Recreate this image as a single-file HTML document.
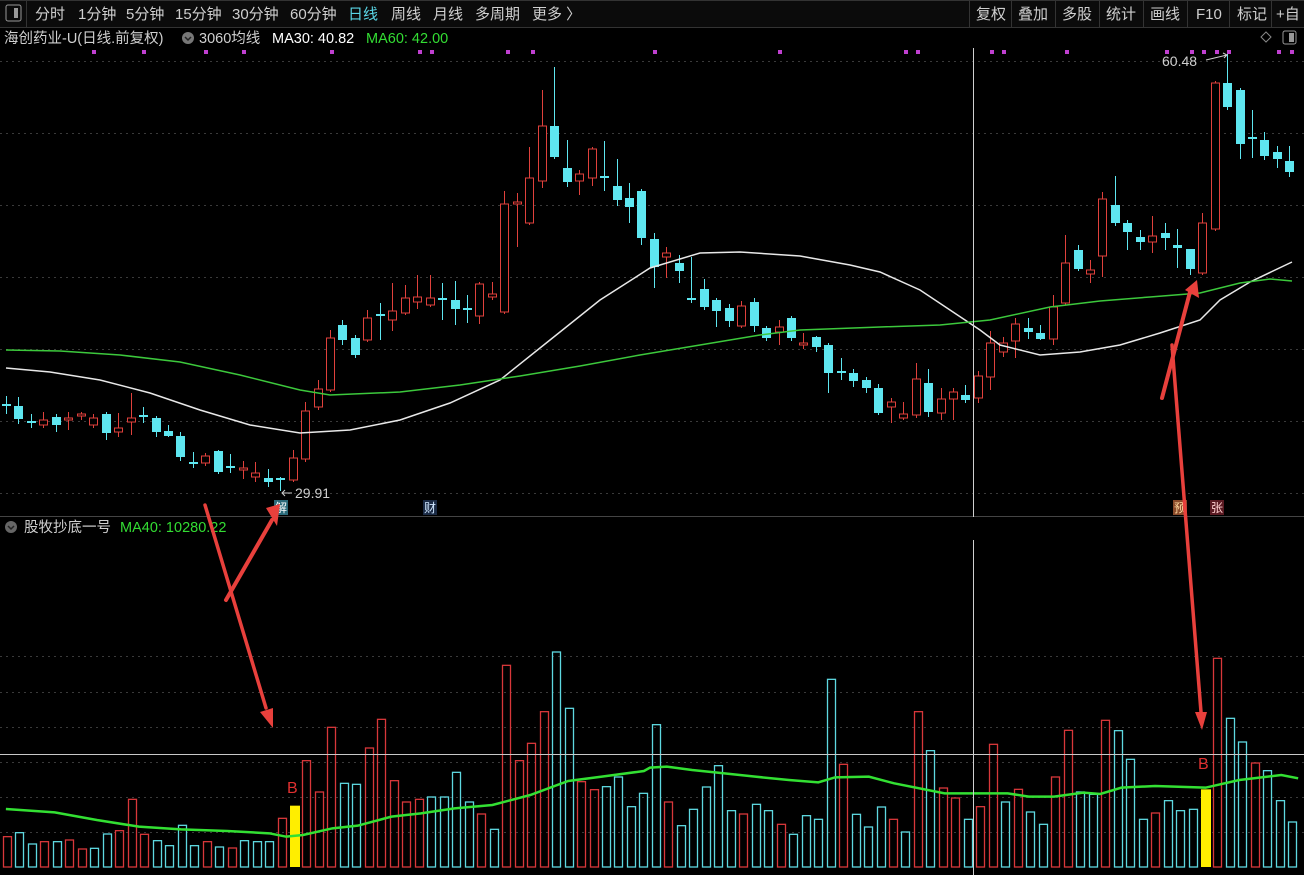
<!DOCTYPE html>
<html><head><meta charset="utf-8">
<style>
html,body{margin:0;padding:0;background:#000;width:1304px;height:875px;overflow:hidden;font-family:"Liberation Sans","Noto Sans CJK SC",sans-serif;}
svg{position:absolute;left:0;top:0}
</style></head><body>
<svg id="s" width="1304" height="875" xmlns="http://www.w3.org/2000/svg" font-family="Liberation Sans, Noto Sans CJK SC, sans-serif">
<rect width="1304" height="875" fill="#000"/>
<rect x="0" y="0" width="1304" height="27" fill="#0b0b0b"/>
<line x1="0" y1="27.5" x2="1304" y2="27.5" stroke="#333"/>
<line x1="0" y1="0.5" x2="1304" y2="0.5" stroke="#333"/>
<rect x="6" y="5" width="15" height="16" fill="none" stroke="#999" rx="2"/><rect x="14" y="8" width="4" height="10" fill="#999"/>
<line x1="26.5" y1="0" x2="26.5" y2="27" stroke="#333"/>
<g font-size="15" fill="#cfcfcf">
<text x="35" y="19">分时</text><text x="78" y="19">1分钟</text><text x="126" y="19">5分钟</text><text x="175" y="19">15分钟</text><text x="232" y="19">30分钟</text><text x="290" y="19">60分钟</text>
<text x="348" y="19" fill="#5ad6e6">日线</text><text x="391" y="19">周线</text><text x="433" y="19">月线</text><text x="475" y="19">多周期</text><text x="532" y="19">更多 〉</text>
<text x="976" y="19">复权</text><text x="1018" y="19">叠加</text><text x="1062" y="19">多股</text><text x="1106" y="19">统计</text><text x="1150" y="19">画线</text><text x="1196" y="19">F10</text><text x="1237" y="19">标记</text><text x="1276" y="19">+自</text>
</g>
<g stroke="#333"><line x1="969.5" y1="0" x2="969.5" y2="27"/><line x1="1011.5" y1="0" x2="1011.5" y2="27"/><line x1="1055.5" y1="0" x2="1055.5" y2="27"/><line x1="1099.5" y1="0" x2="1099.5" y2="27"/><line x1="1143.5" y1="0" x2="1143.5" y2="27"/><line x1="1187.5" y1="0" x2="1187.5" y2="27"/><line x1="1229.5" y1="0" x2="1229.5" y2="27"/><line x1="1271.5" y1="0" x2="1271.5" y2="27"/></g>
<g font-size="14.5">
<text x="4" y="43" fill="#cfcfcf">海创药业-U(日线.前复权)</text>
<circle cx="188" cy="38" r="6" fill="#777"/><path d="M185 37l3 3 3-3" stroke="#222" fill="none" stroke-width="1.5"/>
<text x="199" y="43" fill="#cfcfcf">3060均线</text>
<text x="272" y="43" fill="#ffffff">MA30: 40.82</text>
<text x="366" y="43" fill="#33dd33">MA60: 42.00</text>
</g>
<path d="M1266 32l5 5-5 5-5-5z" fill="none" stroke="#888"/>
<rect x="1283" y="31" width="13" height="13" rx="2" fill="none" stroke="#999"/><rect x="1289" y="33" width="5" height="9" fill="#999"/>
<g id="grid" stroke="#3a3a3a" stroke-dasharray="2,4"></g>
<line x1="0" y1="516.5" x2="1304" y2="516.5" stroke="#444"/>
<g id="dots" fill="#c040d0"></g>
<g id="ch"></g>
<g id="vol"></g>
<polyline id="w" fill="none" stroke="#e8e8e8" stroke-width="1.5"/>
<polyline id="g" fill="none" stroke="#3cc83c" stroke-width="1.5"/>
<polyline id="v" fill="none" stroke="#33e033" stroke-width="2.5"/>
<line x1="973.5" y1="48" x2="973.5" y2="517" stroke="#d0d0d0"/>
<line x1="973.5" y1="540" x2="973.5" y2="875" stroke="#d0d0d0"/>
<line x1="0" y1="754.5" x2="1304" y2="754.5" stroke="#c8c8c8"/>
<g font-size="14">
<text x="295" y="498" fill="#cfcfcf">29.91</text>
<path d="M292 493h-10m3-3l-3 3 3 3" stroke="#ccc" fill="none"/>
<text x="1162" y="66" fill="#cfcfcf">60.48</text>
<path d="M1206 60l21-5m-4-2l4 2-3 3" stroke="#ccc" fill="none"/>
</g>
<g font-size="12">
<rect x="274" y="500" width="14" height="15" fill="#2a6a7a"/><text x="275" y="512" fill="#fff">解</text>
<rect x="423" y="500" width="14" height="15" fill="#1a2a44"/><text x="424" y="512" fill="#cfe6ff">财</text>
<rect x="1173" y="500" width="14" height="15" fill="#8a4a2a"/><text x="1174" y="512" fill="#ffd8a0">预</text>
<rect x="1210" y="500" width="14" height="15" fill="#5a1a22"/><text x="1211" y="512" fill="#ffd0d0">张</text>
</g>
<g font-size="14.5">
<circle cx="11" cy="527" r="6" fill="#666"/><path d="M8 526l3 3 3-3" stroke="#222" fill="none" stroke-width="1.5"/>
<text x="24" y="532" fill="#cfcfcf">股牧抄底一号</text>
<text x="120" y="532" fill="#33dd33">MA40: 10280.22</text>
</g>
<g font-size="16" fill="#e03030"><text x="287" y="793">B</text><text x="1198" y="769">B</text></g>
<g stroke="#e8403c" stroke-width="4" fill="#e8403c" stroke-linecap="round">
<line x1="226" y1="600" x2="272" y2="520"/><path d="M266 508l14-4-3 22z" stroke="none"/>
<line x1="205" y1="505" x2="266" y2="708" stroke-width="3.5"/><path d="M260 712l13 -4 0 20z" stroke="none"/>
<line x1="1162" y1="398" x2="1190" y2="292"/><path d="M1185 290l12-10 2 18z" stroke="none"/>
<line x1="1172" y1="345" x2="1201" y2="712" stroke-width="3.5"/><path d="M1195 712l12 0-5 18z" stroke="none"/>
</g>
</svg>
<script>
var NS="http://www.w3.org/2000/svg";
function el(p,t,a){var e=document.createElementNS(NS,t);for(var k in a)e.setAttribute(k,a[k]);p.appendChild(e);return e;}
var grid=document.getElementById('grid');
[61,133,205,277,349,421,493,656,692,727,762,797,832].forEach(function(y){el(grid,'line',{x1:0,x2:1304,y1:y+.5,y2:y+.5});});
var dots=document.getElementById('dots');
[94,144,206,244,332,420,432,508,533,655,780,906,918,992,1004,1067,1167,1192,1204,1217,1229,1279,1292].forEach(function(x){el(dots,'rect',{x:x-2,y:50,width:4,height:4});});
var R="#e0413c",C="#5ee6f0";
var D={0:[404,406,396,414],1:[406,419,397,424],2:[421,423,414,428],3:[425,420,412,428],4:[417,425,414,432],5:[419,418,412,430],6:[416,414,412,420],7:[425,418,414,428],8:[414,433,412,440],9:[432,428,413,437],10:[422,418,393,435],11:[415,416,407,423],12:[418,432,416,437],13:[431,436,425,437],14:[436,457,432,461],15:[462,464,452,468],16:[463,456,453,466],17:[451,472,450,474],18:[466,468,454,473],19:[470,468,461,479],20:[477,473,462,482],21:[478,482,469,487],22:[478,479,477,491],23:[480,458,450,482],24:[459,411,402,462],25:[407,389,380,410],26:[390,338,330,392],27:[325,340,320,345],28:[338,355,335,358],29:[340,318,310,342],30:[314,316,303,340],31:[320,311,283,331],32:[313,298,285,315],33:[302,297,275,309],34:[305,298,275,307],35:[298,300,283,320],36:[300,309,281,325],37:[308,310,295,323],38:[316,284,282,324],39:[297,294,282,300],40:[312,204,191,314],41:[204,202,193,247],42:[223,178,147,225],43:[181,126,90,188],44:[126,157,67,159],45:[168,182,140,187],46:[181,174,170,195],47:[178,149,147,186],48:[176,178,141,191],49:[186,200,159,206],50:[198,207,183,223],51:[191,238,189,245],52:[239,267,233,288],53:[257,253,247,278],54:[263,271,255,283],55:[298,300,257,303],56:[289,307,279,310],57:[300,311,298,327],58:[308,321,304,327],59:[326,306,301,328],60:[302,326,298,332],61:[328,338,326,341],62:[332,327,320,345],63:[318,338,316,341],64:[345,343,333,349],65:[337,347,336,352],66:[345,373,343,393],67:[371,373,358,380],68:[373,381,369,387],69:[380,388,377,393],70:[388,413,384,415],71:[407,402,398,423],72:[418,414,402,420],73:[415,379,363,418],74:[383,412,369,417],75:[413,399,388,420],76:[399,392,388,420],77:[395,400,385,403],78:[398,376,371,403],79:[377,343,331,390],80:[352,343,337,357],81:[341,324,318,358],82:[328,332,318,339],83:[333,339,325,340],84:[339,307,295,345],85:[303,263,235,305],86:[250,269,245,271],87:[274,270,260,283],88:[256,199,192,277],89:[205,223,176,226],90:[223,232,220,250],91:[237,242,230,250],92:[242,236,216,253],93:[233,238,223,250],94:[245,248,229,268],95:[249,269,249,275],96:[273,223,213,275],97:[229,83,81,231],98:[83,107,54,110],99:[90,144,88,159],100:[137,137,110,158],101:[140,156,132,160],102:[152,159,146,168],103:[161,172,146,177]};
var ch=document.getElementById('ch');
for(var i=0;i<=103;i++){var d=D[i];if(!d)continue;var x=Math.round(6+12.46*i)+.5;var up=d[1]<d[0];var col=up?R:C;
var t=Math.min(d[0],d[1]),b=Math.max(d[0],d[1]);if(b-t<2)b=t+2;
el(ch,'line',{x1:x,x2:x,y1:d[2],y2:d[3],stroke:col});
if(up)el(ch,'rect',{x:x-4,y:t,width:8,height:b-t,fill:'#000',stroke:col});
else el(ch,'rect',{x:x-4.5,y:t,width:9,height:b-t,fill:col});}
var v1=[[590,'r'],[578,'c'],[612,'c'],[605,'r'],[605,'c'],[600,'r'],[627,'r'],[625,'c'],[582,'c'],[572,'r'],[478,'r'],[583,'r'],[602,'c'],[617,'c'],[556,'c'],[617,'c'],[605,'r'],[621,'c'],[624,'r'],[602,'c'],[605,'c'],[605,'c'],[535,'r'],[497,'y'],[362,'r'],[456,'r'],[262,'r'],[430,'c'],[433,'c'],[324,'r'],[238,'r'],[422,'r'],[486,'r'],[478,'r'],[471,'c'],[471,'c'],[397,'c'],[486,'c'],[522,'r'],[568,'c'],[76,'r'],[362,'r'],[310,'r'],[215,'r'],[36,'c'],[205,'c'],[425,'r'],[449,'r'],[440,'c'],[411,'c'],[500,'c'],[460,'c'],[254,'c'],
[486,'r'],[557,'c'],[508,'c'],[441,'c'],[377,'c'],[512,'c'],[522,'r'],[493,'c'],[512,'c'],[553,'r'],[583,'c'],[527,'c'],[538,'c'],[118,'c'],[373,'r'],[523,'c'],[561,'c'],[501,'c'],[538,'r'],[576,'c'],[215,'r'],[332,'c'],[444,'r'],[474,'r'],[538,'c'],[500,'r'],[313,'r'],[486,'c'],[448,'r'],[516,'c'],[553,'c'],[411,'r'],[271,'r'],[456,'c'],[463,'c'],[241,'r'],[272,'c'],[358,'c'],[538,'c'],[519,'r'],[482,'c'],[512,'c'],[508,'c'],[448,'y'],[55,'r'],[235,'c'],[306,'c'],[369,'r'],[392,'c'],[482,'c'],[546,'c']];
var vol=document.getElementById('vol');
var yi=-1;v1.forEach(function(v,i){if(v[1]=='y'&&i>30)yi=i;});
v1.forEach(function(v,i){var xl;
if(i<=23) xl=3+(287/23)*i; else xl=290+(1201-290)/(yi-23)*(i-23);
var x=Math.round(xl)+.5;var top=640+v[0]/3;var bot=867;
if(v[1]=='y')el(vol,'rect',{x:x-0.5,y:top,width:10,height:bot-top,fill:'#ffee00'});
else el(vol,'rect',{x:x,y:top,width:8,height:bot-top,fill:'none',stroke:v[1]=='r'?'#d8373a':'#5ed8e0','stroke-width':1.3});});
function pl(id,pts){document.getElementById(id).setAttribute('points',pts.map(function(p){return p.join(',')}).join(' '));}
pl('w',[[6,368],[50,372],[100,380],[150,393],[200,410],[250,425],[300,433],[350,430],[400,420],[450,403],[500,380],[550,340],[600,300],[650,268],[700,253],[740,252],[800,256],[850,265],[880,272],[920,290],[950,310],[980,330],[1000,345],[1040,355],[1080,352],[1120,345],[1160,333],[1200,320],[1220,300],[1250,282],[1292,262]]);
pl('g',[[6,350],[60,351],[120,355],[180,362],[240,375],[300,390],[330,395],[400,392],[460,385],[520,376],[580,366],[640,355],[700,345],[760,335],[800,330],[880,327],[940,325],[990,320],[1050,307],[1100,301],[1150,297],[1200,293],[1240,283],[1270,279],[1292,281]]);
var a=[[14,507],[130,517],[230,540],[330,560],[430,568],[540,573],[640,580],[680,590],[720,585],[790,565],[850,557],[930,530],[1000,520],[1080,505],[1170,495],[1260,465],[1350,423],[1430,410],[1530,393]].map(function(p){return [p[0]/2.376,640+p[1]/3]});
var b=[[0,383],[40,380],[100,390],[160,398],[250,410],[330,420],[400,427],[440,412],[520,410],[580,430],[700,460],[850,460],[900,470],[960,470],[1030,458],[1070,462],[1120,443],[1200,438],[1320,443],[1400,420],[1500,405],[1540,415]].map(function(p){return [650+p[0]/2.376,640+p[1]/3]});
pl('v',a.concat(b));
</script>
</body></html>
